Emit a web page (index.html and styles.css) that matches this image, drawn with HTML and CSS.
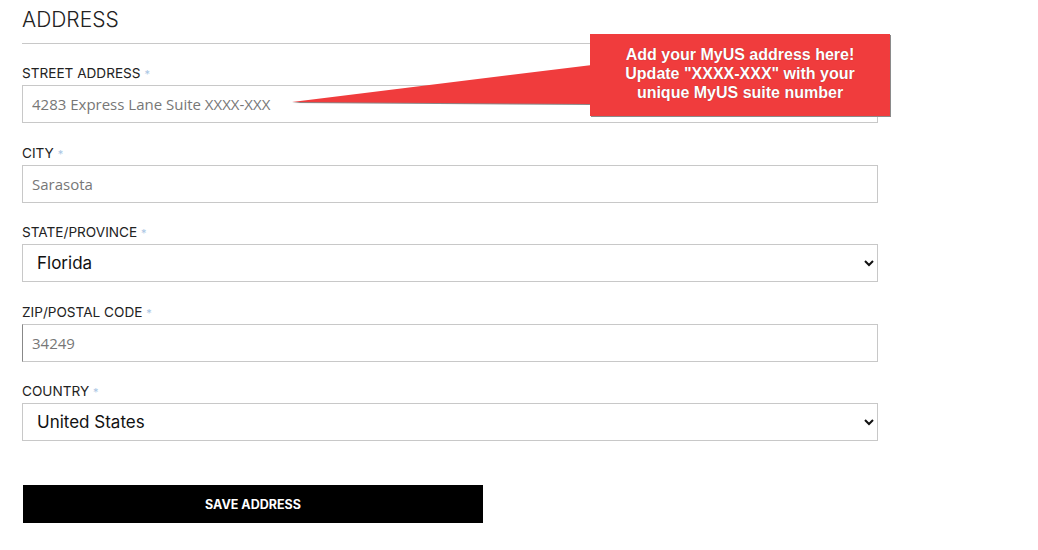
FILE: index.html
```html
<!DOCTYPE html>
<html lang="en">
<head>
    <meta charset="UTF-8">
    <title>Address</title>
    <link rel="stylesheet" href="styles.css">
</head>
<body>
    <!-- address form -->
    <div class="address">
        <h2 class="address-title">ADDRESS</h2>

        <form class="address-form">
            <div class="field">
                <label class="field-label">STREET ADDRESS <span class="req">*</span></label>
                <input class="field-input" type="text" value="4283 Express Lane Suite XXXX-XXX">
            </div>

            <div class="field">
                <label class="field-label">CITY <span class="req">*</span></label>
                <input class="field-input" type="text" value="Sarasota">
            </div>

            <div class="field">
                <label class="field-label">STATE/PROVINCE <span class="req">*</span></label>
                <select class="field-select">
                    <option>Florida</option>
                </select>
            </div>

            <div class="field">
                <label class="field-label">ZIP/POSTAL CODE <span class="req">*</span></label>
                <input class="field-input field-input-active" type="text" value="34249">
            </div>

            <div class="field">
                <label class="field-label">COUNTRY <span class="req">*</span></label>
                <select class="field-select">
                    <option>United States</option>
                </select>
            </div>

            <button class="save-btn" type="button">SAVE ADDRESS</button>
        </form>

        <!-- callout pointing at the street field -->
        <div class="callout">
            <svg class="callout-pointer" width="300" height="42" viewBox="0 0 300 42">
                <polygon points="0,38 300,1 300,40" fill="#888" transform="translate(0,1)"></polygon>
                <polygon points="0,38 300,1 300,40" fill="#f03c3d"></polygon>
            </svg>
            <div class="callout-box">
                Add your MyUS address here!<br>
                Update "XXXX-XXX" with your<br>
                unique MyUS suite number
            </div>
        </div>
    </div>
</body>
</html>
```

FILE: styles.css
```css
*{
    margin: 0;
    padding: 0;
    box-sizing: border-box;
}
body{
    background-color: #fff;
    font-family: Inter, "Liberation Sans", sans-serif;
    color: #222;
}
.address{
    position: relative;
    width: 856px;
    margin-left: 22px;
}
.address-title{
    font-size: 21px;
    font-weight: 300;
    color: #222;
    height: 44px;
    padding-top: 7px;
    border-bottom: 1px solid #c8c8c8;
}
.address-form{
    display: flex;
    flex-direction: column;
    padding-top: 19px;
}
.field{
    display: flex;
    flex-direction: column;
    margin-bottom: 19.5px;
}
.field-label{
    display: block;
    height: 20px;
    font-size: 13.6px;
    line-height: 20px;
    margin-bottom: 2px;
    color: #222;
}
.req{
    color: #a9c6e4;
    font-size: 11px;
    line-height: 1;
}
.field-input{
    height: 38px;
    border: 1px solid #c8c8c8;
    padding: 0 9px;
    font-family: "Open Sans", sans-serif;
    font-size: 15px;
    color: #777;
    outline: none;
}
.field-input-active{
    border-left-color: #888;
}
.field-select{
    height: 38px;
    border: 1px solid #c8c8c8;
    border-radius: 0;
    background-color: #fff;
    padding: 0 10px;
    font-family: Inter, sans-serif;
    font-size: 17px;
    color: #111;
}
.save-btn{
    margin-top: 24.5px;
    width: 460px;
    height: 38px;
    margin-left: 1px;
    border: none;
    background-color: #000;
    color: #fff;
    font-family: Inter, sans-serif;
    font-weight: 700;
    font-size: 12.5px;
}
/* callout over the street input */
.callout{
    position: absolute;
    left: 270px;
    top: 34px;
    display: flex;
    align-items: flex-start;
}
.callout-pointer{
    margin-top: 30px;
}
.callout-box{
    width: 300px;
    height: 82px;
    margin-left: -2px;
    background-color: #f03c3d;
    box-shadow: 1px 1px 0 #8a8a8a;
    color: #fff;
    font-family: "Liberation Sans", Arial, sans-serif;
    font-weight: 700;
    font-size: 16px;
    line-height: 19px;
    text-align: center;
    padding-top: 11px;
    text-shadow: 0 0 1px rgba(0,0,0,0.35);
}
```
